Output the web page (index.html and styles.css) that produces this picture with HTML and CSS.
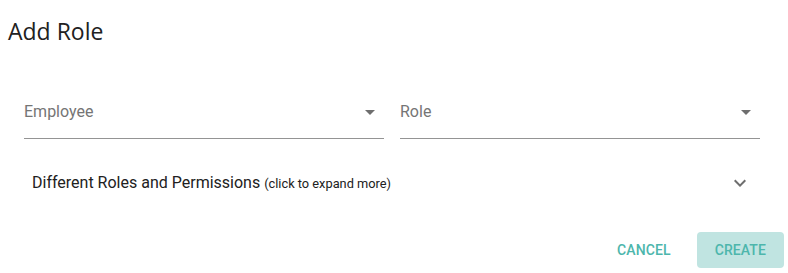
FILE: index.html
```html
<!DOCTYPE html>
<html lang="en">
<head>
	<meta charset="UTF-8">
	<meta name="viewport" content="width=device-width, initial-scale=1.0">
	<title>Add Role</title>
	<link rel="stylesheet" href="styles.css">
</head>
<body>
	<div class="dialog">
		<h2 class="dialog-title">Add Role</h2>

		<div class="fields">
			<div class="select">
				<span class="select-label">Employee</span>
				<svg class="select-arrow" viewBox="0 0 24 24"><path d="M7 10l5 5 5-5z"/></svg>
			</div>
			<div class="select">
				<span class="select-label">Role</span>
				<svg class="select-arrow" viewBox="0 0 24 24"><path d="M7 10l5 5 5-5z"/></svg>
			</div>
		</div>

		<div class="accordion">
			<div class="accordion-summary">
				<span class="accordion-heading">Different Roles and Permissions <small>(click to expand more)</small></span>
				<svg class="expand-icon" viewBox="0 0 24 24"><path d="M16.59 8.59L12 13.17 7.41 8.59 6 10l6 6 6-6z"/></svg>
			</div>
		</div>

		<div class="actions">
			<button class="btn">Cancel</button>
			<button class="btn btn-create">Create</button>
		</div>
	</div>
</body>
</html>
```

FILE: styles.css
```css
body {
	margin: 0;
	background-color: #fff;
	color: #212121;
	font-family: Roboto, "Liberation Sans", sans-serif;
}

.dialog {
	width: 788px;
	height: 273px;
}

.dialog-title {
	margin: 0;
	padding: 15px 0 0 8px;
	font-family: "Open Sans", "Noto Sans", sans-serif;
	font-size: 23px;
	font-weight: 400;
	line-height: 32px;
}

/* select fields */
.fields {
	display: flex;
	gap: 16px;
	margin-top: 53px;
	padding: 0 28px 0 24px;
}

.select {
	flex: 1;
	display: flex;
	align-items: center;
	justify-content: space-between;
	height: 24px;
	padding-bottom: 14px;
	border-bottom: 1px solid #949494;
}

.select-label {
	font-size: 16px;
	line-height: 24px;
	color: #757575;
}

.select-arrow {
	width: 24px;
	height: 24px;
	fill: #6e6e6e;
	margin-right: 2px;
}

/* accordion */
.accordion {
	margin-top: 20px;
	padding: 0 36px 0 32px;
}

.accordion-summary {
	display: flex;
	align-items: center;
	justify-content: space-between;
	height: 48px;
}

.accordion-heading {
	font-size: 16px;
	line-height: 24px;
}

.accordion-heading small {
	font-size: 12.8px;
}

.expand-icon {
	width: 24px;
	height: 24px;
	fill: #6e6e6e;
}

/* buttons */
.actions {
	display: flex;
	justify-content: flex-end;
	gap: 10px;
	margin-top: 25px;
	padding-right: 4px;
}

.btn {
	height: 36px;
	padding: 0 16px;
	border: none;
	border-radius: 4px;
	background: none;
	font-family: Roboto, "Liberation Sans", sans-serif;
	font-size: 14px;
	font-weight: 500;
	letter-spacing: 0.1px;
	text-transform: uppercase;
	color: #4db6ac;
	cursor: pointer;
}

.btn-create {
	padding: 0 18px;
	background-color: #c0e4e1;
}
```
